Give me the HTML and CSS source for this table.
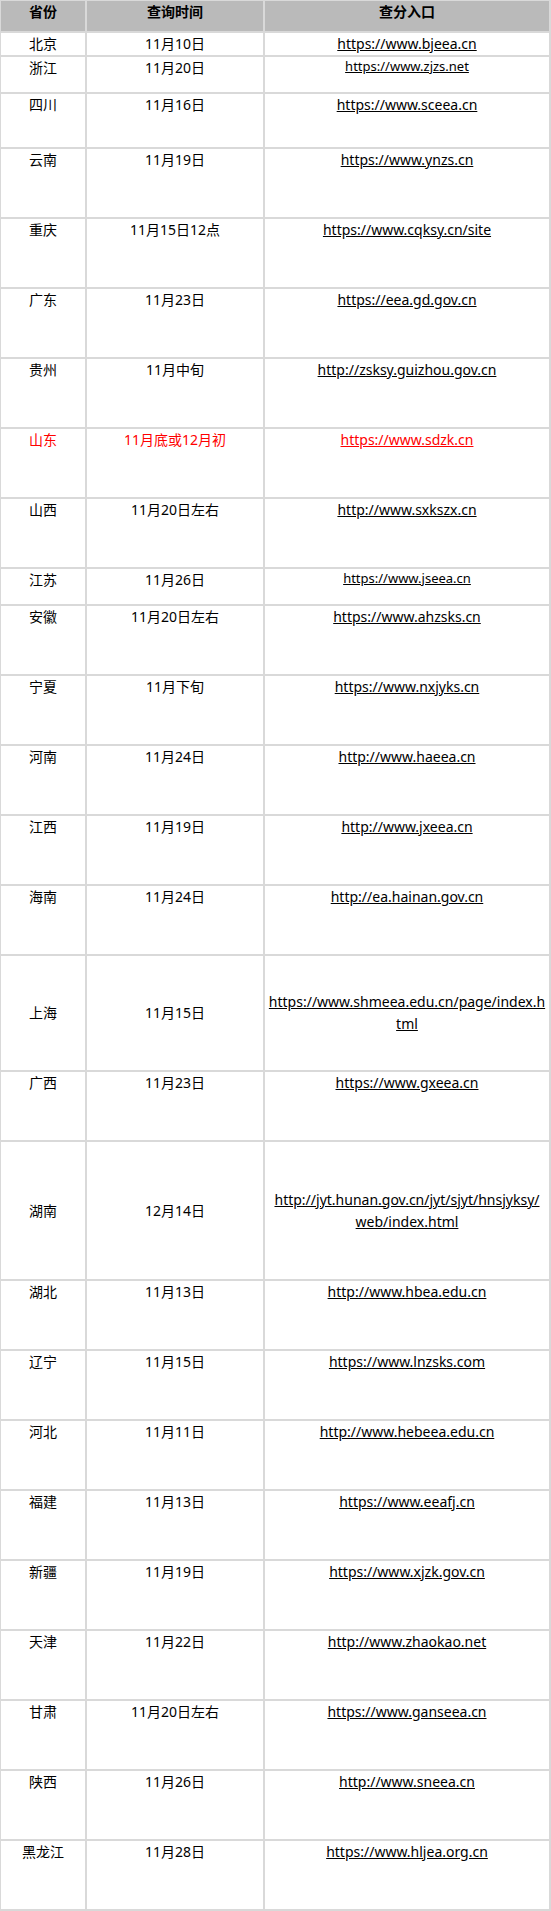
FILE: index.html
```html
<!DOCTYPE html>
<html lang="zh-CN">
<head>
<meta charset="utf-8">
<title>查分入口</title>
<link rel="stylesheet" href="styles.css">
</head>
<body>
<table class="score-table">
  <colgroup>
    <col class="c-prov">
    <col class="c-time">
    <col class="c-link">
  </colgroup>
  <thead>
    <tr class="head"><th>省份</th><th>查询时间</th><th>查分入口</th></tr>
  </thead>
  <tbody>
    <tr class="h24"><td>北京</td><td>11月10日</td><td><a href="#">https://www.bjeea.cn</a></td></tr>
    <tr class="h37"><td>浙江</td><td>11月20日</td><td class="tight"><a class="small" href="#">https://www.zjzs.net</a></td></tr>
    <tr class="h55"><td>四川</td><td>11月16日</td><td><a href="#">https://www.sceea.cn</a></td></tr>
    <tr class="h70"><td>云南</td><td>11月19日</td><td><a href="#">https://www.ynzs.cn</a></td></tr>
    <tr class="h70"><td>重庆</td><td>11月15日12点</td><td><a href="#">https://www.cqksy.cn/site</a></td></tr>
    <tr class="h70"><td>广东</td><td>11月23日</td><td><a href="#">https://eea.gd.gov.cn</a></td></tr>
    <tr class="h70"><td>贵州</td><td>11月中旬</td><td><a href="#">http://zsksy.guizhou.gov.cn</a></td></tr>
    <tr class="h70 hot"><td>山东</td><td>11月底或12月初</td><td><a href="#">https://www.sdzk.cn</a></td></tr>
    <tr class="h70"><td>山西</td><td>11月20日左右</td><td><a href="#">http://www.sxkszx.cn</a></td></tr>
    <tr class="h37"><td>江苏</td><td>11月26日</td><td class="tight"><a class="small" href="#">https://www.jseea.cn</a></td></tr>
    <tr class="h70"><td>安徽</td><td>11月20日左右</td><td><a href="#">https://www.ahzsks.cn</a></td></tr>
    <tr class="h70"><td>宁夏</td><td>11月下旬</td><td><a href="#">https://www.nxjyks.cn</a></td></tr>
    <tr class="h70"><td>河南</td><td>11月24日</td><td><a href="#">http://www.haeea.cn</a></td></tr>
    <tr class="h70"><td>江西</td><td>11月19日</td><td><a href="#">http://www.jxeea.cn</a></td></tr>
    <tr class="h70"><td>海南</td><td>11月24日</td><td><a href="#">http://ea.hainan.gov.cn</a></td></tr>
    <tr class="h116 mid"><td>上海</td><td>11月15日</td><td><a href="#">https://www.shmeea.edu.cn/page/index.h<br>tml</a></td></tr>
    <tr class="h70"><td>广西</td><td>11月23日</td><td><a href="#">https://www.gxeea.cn</a></td></tr>
    <tr class="h139 mid"><td>湖南</td><td>12月14日</td><td><a href="#">http://jyt.hunan.gov.cn/jyt/sjyt/hnsjyksy/<br>web/index.html</a></td></tr>
    <tr class="h70"><td>湖北</td><td>11月13日</td><td><a href="#">http://www.hbea.edu.cn</a></td></tr>
    <tr class="h70"><td>辽宁</td><td>11月15日</td><td><a href="#">https://www.lnzsks.com</a></td></tr>
    <tr class="h70"><td>河北</td><td>11月11日</td><td><a href="#">http://www.hebeea.edu.cn</a></td></tr>
    <tr class="h70"><td>福建</td><td>11月13日</td><td><a href="#">https://www.eeafj.cn</a></td></tr>
    <tr class="h70"><td>新疆</td><td>11月19日</td><td><a href="#">https://www.xjzk.gov.cn</a></td></tr>
    <tr class="h70"><td>天津</td><td>11月22日</td><td><a href="#">http://www.zhaokao.net</a></td></tr>
    <tr class="h70"><td>甘肃</td><td>11月20日左右</td><td><a href="#">https://www.ganseea.cn</a></td></tr>
    <tr class="h70"><td>陕西</td><td>11月26日</td><td><a href="#">http://www.sneea.cn</a></td></tr>
    <tr class="h70"><td>黑龙江</td><td>11月28日</td><td><a href="#">https://www.hljea.org.cn</a></td></tr>
  </tbody>
</table>
</body>
</html>
```

FILE: styles.css
```css
html, body {
  margin: 0;
  padding: 0;
  background: #ffffff;
}

body {
  font-family: "Noto Sans", "Noto Sans CJK SC", sans-serif;
  font-size: 14px;
  line-height: 22px;
  color: #000000;
}

.score-table {
  width: 551px;
  table-layout: fixed;
  border-collapse: separate;
  border-spacing: 0;
  border-right: 1px solid #d9d9d9;
  border-bottom: 1px solid #d9d9d9;
}

.c-prov { width: 86px; }
.c-time { width: 178px; }
.c-link { width: 286px; }

.score-table th,
.score-table td {
  box-sizing: border-box;
  border: 1px solid #d9d9d9;
  padding: 0 2px;
  text-align: center;
  vertical-align: top;
  white-space: nowrap;
}

.score-table th {
  height: 32px;
  background: #bababa;
  font-weight: 700;
}

.score-table a {
  color: #000000;
  text-decoration: underline;
}

.h24 td { height: 24px; }
.h37 td { height: 37px; }
.h55 td { height: 55px; }
.h70 td { height: 70px; }
.h116 td { height: 116px; }
.h139 td { height: 139px; }

.mid td { vertical-align: middle; }

.tight { line-height: 18px; }
.small { font-size: 13px; }

.hot td,
.hot a {
  color: #ff0000;
}
```
